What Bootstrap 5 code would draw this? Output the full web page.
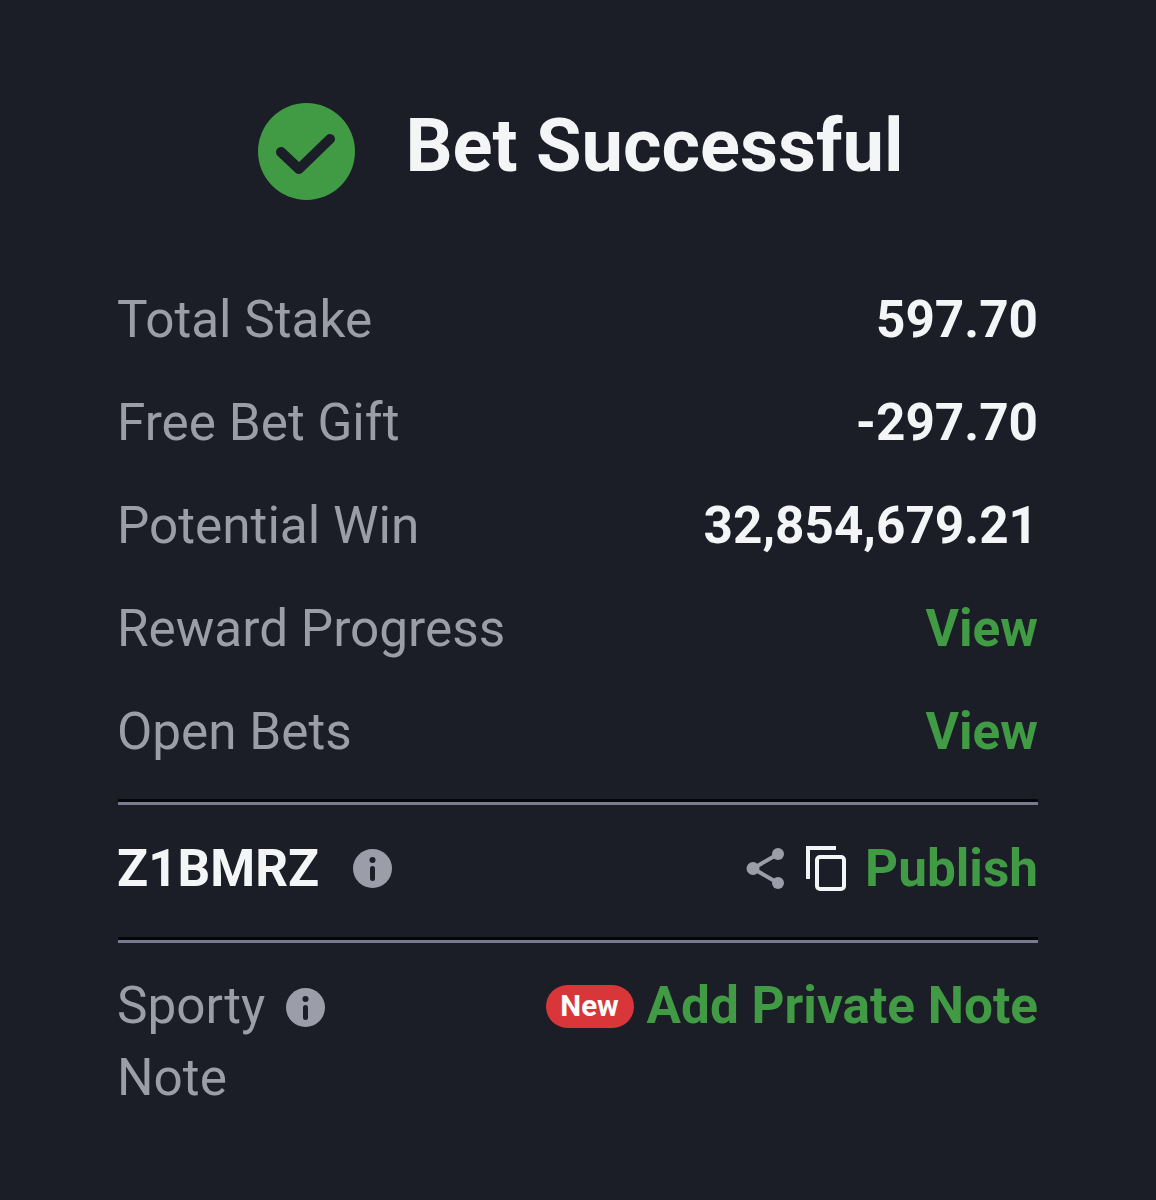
<!DOCTYPE html>
<html lang="en">
<head>
  <meta charset="UTF-8" />
  <meta name="viewport" content="width=device-width, initial-scale=1">
  <title>Bet Successful</title>
  <link href="https://cdn.jsdelivr.net/npm/bootstrap@5.3.3/dist/css/bootstrap.min.css" rel="stylesheet">
  <style>
    html, body { height: 1200px; overflow: hidden; }
    body { background: #1b1e26; font-family: Roboto, "Liberation Sans", sans-serif; color: #f4f5f7; }
    .bet-wrap { padding: 103px 118px 0; }
    .bet-head { height: 97px; margin-bottom: 68px; padding-left: 6px; gap: 50px; }
    .bet-title { font-size: 74px; font-weight: 700; line-height: 1; margin: 0 0 12px; }
    .bet-row { height: 103px; font-size: 51.3px; line-height: 1; }
    .bet-label { color: #9b9da9; margin-left: -1px; }
    .bet-val { font-weight: 700; }
    .bet-green { color: #409b44; font-weight: 700; }
    .bet-rule { height: 3px; margin: 0; border: 0; opacity: 1; background: #797c91; box-shadow: 0 -3px 0 #05060a; }
    .bet-rule-first { margin-top: 19px; }
    .bet-code { height: 135px; padding-bottom: 8px; font-size: 51.3px; line-height: 1; }
    .bet-code-id { margin-left: -1px; }
    .bet-code-info { margin-left: 34px; }
    .bet-copy { margin-left: 22px; margin-right: 19px; }
    .bet-note { padding-top: 27px; font-size: 51.3px; line-height: 72px; }
    .bet-note-label { width: 215px; }
    .bet-note-info { margin-left: 8px; vertical-align: -4px; }
    .bet-new { background: #d9363a; color: #fff; font-size: 29.5px; font-weight: 700; width: 88px; height: 43px; border-radius: 22px; line-height: 42px; margin-right: 13px; }
  </style>
</head>
<body>
  <div class="bet-wrap">
    <div class="bet-head d-flex align-items-center justify-content-center">
      <svg width="97" height="97" viewBox="0 0 97 97"><circle cx="48.5" cy="48.5" r="48.5" fill="#409b44"/><path d="M23 49 L41 66 L72 36" fill="none" stroke="#1b1e26" stroke-width="10" stroke-linecap="round" stroke-linejoin="round"/></svg>
      <h1 class="bet-title">Bet Successful</h1>
    </div>

    <div class="bet-row d-flex align-items-center justify-content-between"><span class="bet-label">Total Stake</span><span class="bet-val">597.70</span></div>
    <div class="bet-row d-flex align-items-center justify-content-between"><span class="bet-label">Free Bet Gift</span><span class="bet-val">-297.70</span></div>
    <div class="bet-row d-flex align-items-center justify-content-between"><span class="bet-label">Potential Win</span><span class="bet-val">32,854,679.21</span></div>
    <div class="bet-row d-flex align-items-center justify-content-between"><span class="bet-label">Reward Progress</span><span class="bet-green">View</span></div>
    <div class="bet-row d-flex align-items-center justify-content-between"><span class="bet-label">Open Bets</span><span class="bet-green">View</span></div>

    <hr class="bet-rule bet-rule-first">
    <div class="bet-code d-flex align-items-center justify-content-between">
      <div class="d-flex align-items-center">
        <span class="bet-val bet-code-id">Z1BMRZ</span>
        <svg class="bet-code-info" width="39" height="39" viewBox="0 0 39 39"><circle cx="19.5" cy="19.5" r="19.5" fill="#9b9da9"/><circle cx="19.5" cy="11" r="3" fill="#1b1e26"/><rect x="17" y="17" width="5" height="15" rx="2.5" fill="#1b1e26"/></svg>
      </div>
      <div class="d-flex align-items-center">
        <svg width="38" height="41" viewBox="0 0 38 41"><path d="M32 6 L7 20.5 L32 35" fill="none" stroke="#9b9da9" stroke-width="4"/><circle cx="32" cy="6" r="6" fill="#9b9da9"/><circle cx="7" cy="20.5" r="6.5" fill="#9b9da9"/><circle cx="32" cy="35" r="6" fill="#9b9da9"/></svg>
        <svg class="bet-copy" width="40" height="45" viewBox="0 0 40 45"><path d="M2 33 V2 H30" fill="none" stroke="#f4f5f7" stroke-width="4"/><rect x="11" y="11" width="27" height="32" rx="3" fill="none" stroke="#f4f5f7" stroke-width="4"/></svg>
        <span class="bet-green">Publish</span>
      </div>
    </div>
    <hr class="bet-rule">

    <div class="bet-note d-flex justify-content-between align-items-start">
      <div class="bet-note-label bet-label">Sporty <svg class="bet-note-info" width="39" height="39" viewBox="0 0 39 39"><circle cx="19.5" cy="19.5" r="19.5" fill="#9b9da9"/><circle cx="19.5" cy="11" r="3" fill="#1b1e26"/><rect x="17" y="17" width="5" height="15" rx="2.5" fill="#1b1e26"/></svg> Note</div>
      <div class="d-flex align-items-center">
        <span class="bet-new text-center">New</span>
        <span class="bet-green">Add Private Note</span>
      </div>
    </div>
  </div>
</body>
</html>
